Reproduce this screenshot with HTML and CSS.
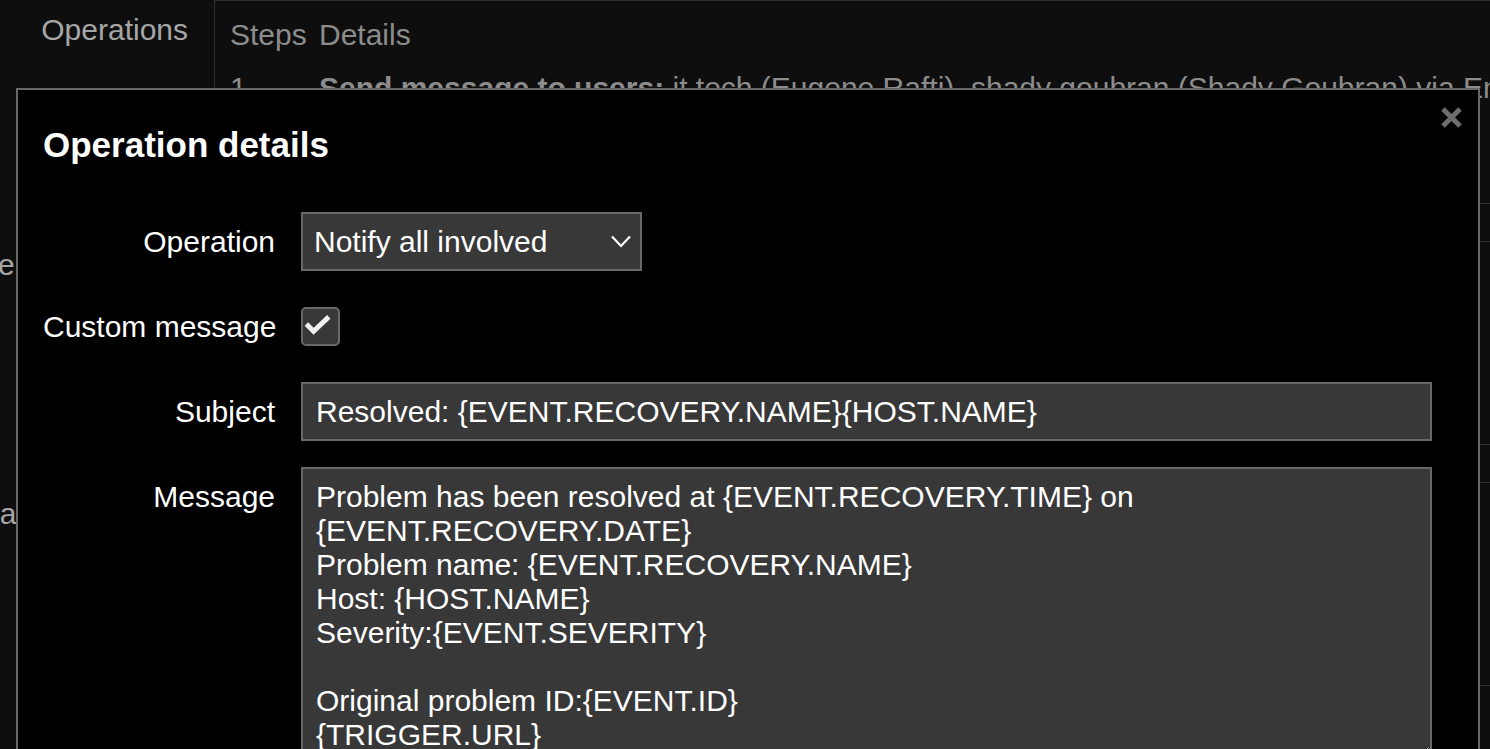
FILE: index.html
```html
<!DOCTYPE html>
<html lang="en">
  <head>
    <meta charset="UTF-8" />
    <title>Action – Operations</title>
    <link rel="stylesheet" href="styles.css">
  </head>
  <body>
    <!-- ===== PAGE (behind the dialog) ===== -->
    <main class="page">
      <div class="form-row">
        <div class="row-label"><span>Operations</span></div>
        <div class="op-table">
          <div class="op-head"><span class="col-step">Steps</span><span>Details</span></div>
          <div class="op-line">
            <span class="col-step">1</span>
            <span><b>Send message to users:</b> it tech (Eugene Rafti), shady goubran (Shady Goubran) via Email</span>
          </div>
        </div>
      </div>

      <!-- these two tables sit under the dialog, only their edges show -->
      <div class="form-row form-row--recovery">
        <div class="row-label"><span>Recovery operations</span></div>
        <div class="op-table"></div>
      </div>

      <div class="form-row form-row--update">
        <div class="row-label"><span>Update operations</span></div>
        <div class="op-table"></div>
      </div>
    </main>

    <!-- ===== OPERATION DIALOG ===== -->
    <div class="dialog" role="dialog" aria-labelledby="dlgTitle">
      <button class="dialog-close" aria-label="close">
        <svg viewBox="0 0 21 21"><path d="M2 2L19 19M19 2L2 19"/></svg>
      </button>
      <h2 id="dlgTitle">Operation details</h2>

      <form class="op-form">
        <label class="f-label" for="opType">Operation</label>
        <div class="f-field">
          <div class="select-wrap">
            <select id="opType">
              <option>Notify all involved</option>
            </select>
            <svg class="chev" viewBox="0 0 20 13"><path d="M1 1.5L10 11L19 1.5"/></svg>
          </div>
        </div>

        <label class="f-label" for="customMsg">Custom message</label>
        <div class="f-field">
          <span class="check" id="customMsg" role="checkbox" aria-checked="true">
            <svg viewBox="0 0 39 39"><path d="M6 19L14 27L31 11"/></svg>
          </span>
        </div>

        <label class="f-label" for="subject">Subject</label>
        <div class="f-field">
          <input id="subject" type="text" value="Resolved: {EVENT.RECOVERY.NAME}{HOST.NAME}" />
        </div>

        <label class="f-label f-label--top" for="message">Message</label>
        <div class="f-field">
          <textarea id="message">Problem has been resolved at {EVENT.RECOVERY.TIME} on {EVENT.RECOVERY.DATE}
Problem name: {EVENT.RECOVERY.NAME}
Host: {HOST.NAME}
Severity:{EVENT.SEVERITY}

Original problem ID:{EVENT.ID}
{TRIGGER.URL}</textarea>
        </div>
      </form>
    </div>
  </body>
</html>
```

FILE: styles.css
```css
:root {
  /* palette */
  --c-page: #0e0e0e;
  --c-line: #2f2f2f;
  --c-muted: #a6a6a6;
  --c-dim: #8c8c8c;
  --c-dialog: #000;
  --c-border: #686868;
  --c-input: #383838;
  --c-fg: #fff;

  /* sizing */
  --w-label: 214px;
}
*,*::before,*::after{box-sizing:border-box;margin:0;padding:0}
html,body{height:100%;background:var(--c-page);color:var(--c-fg);font-family:"Liberation Sans",Arial,sans-serif;font-size:30px;overflow:hidden}

/* ===== PAGE BEHIND ===== */
.page{position:relative}
.form-row{display:grid;grid-template-columns:var(--w-label) 1fr}
/* flex-end lets long labels spill out to the left, like right-aligned text */
.row-label{display:flex;justify-content:flex-end;align-items:flex-start;color:var(--c-muted);padding:13px 26px 0 0;line-height:34px;white-space:nowrap;min-width:0}
.row-label span{flex:none}
.form-row--recovery{margin-top:37px}
.form-row--recovery .row-label{padding-top:7px}
.form-row--update{margin-top:37px}
.form-row--update .row-label{padding:15px 24px 0 0}

.op-table{height:204px;border-top:1px solid var(--c-line);border-left:1px solid var(--c-line);border-bottom:1px solid var(--c-line);white-space:nowrap;overflow:hidden}
.op-head{display:flex;padding:17px 15px 0;line-height:34px;color:var(--c-dim)}
.op-line{display:flex;padding:19px 15px 0;line-height:34px;color:var(--c-dim)}
.col-step{width:89px;flex:none}
.op-line b{font-weight:700}

/* ===== DIALOG ===== */
.dialog{position:absolute;top:88px;left:16px;width:1464px;height:720px;background:var(--c-dialog);border:2px solid var(--c-border);padding:35px 46px 0 25px}
.dialog h2{font-size:35px;font-weight:700;line-height:40px}
.dialog-close{position:absolute;top:17px;right:16px;width:21px;height:21px;background:transparent;border:none;cursor:pointer;display:grid;place-items:center}
.dialog-close svg{width:21px;height:21px;stroke:#6e6e6e;stroke-width:5;fill:none}

/* form grid */
.op-form{margin-top:47px;display:grid;grid-template-columns:232px 1fr;column-gap:26px;row-gap:26px}
.f-label{text-align:right;line-height:34px;align-self:center;white-space:nowrap}
.f-label--top{align-self:start;padding-top:13px}
.f-field{min-height:59px;display:flex;align-items:center}

select,input,textarea{font-family:inherit;font-size:30px;color:var(--c-fg);background:var(--c-input);border:2px solid var(--c-border);border-radius:0;outline:none}

.select-wrap{position:relative;width:341px;height:59px}
.select-wrap select{appearance:none;-webkit-appearance:none;width:100%;height:100%;padding:0 50px 0 11px}
.select-wrap .chev{position:absolute;top:23px;left:310px;width:20px;height:13px;stroke:var(--c-fg);stroke-width:2.2;fill:none;pointer-events:none}

.check{width:39px;height:39px;border:2px solid var(--c-border);border-radius:5px;background:var(--c-input);display:block}
.check svg{display:block;width:35px;height:35px;stroke:#f0f0f0;stroke-width:5.5;fill:none;margin:-2px 0 0 -2px}

#subject{width:100%;height:59px;padding:0 13px}
#message{width:100%;height:289px;padding:11px 13px;line-height:34px;resize:vertical;overflow:hidden;display:block;align-self:start}
```
